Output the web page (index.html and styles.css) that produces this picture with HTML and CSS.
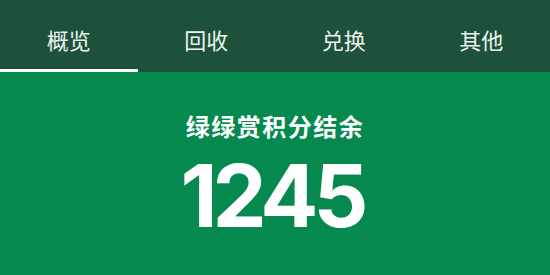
FILE: index.html
```html
<!DOCTYPE html>
<html lang="zh">
<head>
<meta charset="utf-8">
<link rel="stylesheet" href="styles.css">
</head>
<body>
<nav class="tabs">
  <div class="tab active">概览</div>
  <div class="tab">回收</div>
  <div class="tab">兑换</div>
  <div class="tab">其他</div>
</nav>
<main class="summary">
  <div class="label">绿绿赏积分结余</div>
  <div class="points">1245</div>
</main>
</body>
</html>
```
FILE: styles.css
```css
html, body {
  margin: 0;
  padding: 0;
  background: #05894f;
  width: 550px;
  height: 275px;
  overflow: hidden;
  font-family: "Noto Sans CJK SC", "Noto Sans", sans-serif;
}
.tabs {
  display: flex;
  height: 72px;
  background: #1d513a;
}
.tab {
  flex: 1;
  display: flex;
  align-items: center;
  justify-content: center;
  padding-top: 8px;
  box-sizing: border-box;
  font-size: 22px;
  color: #eef3ef;
  border-bottom: 3px solid transparent;
}
.tab.active {
  border-bottom-color: #ffffff;
}
.summary {
  display: flex;
  flex-direction: column;
  align-items: center;
  padding-top: 37px;
  color: #ffffff;
}
.label {
  font-size: 24px;
  font-weight: 700;
  letter-spacing: 1.5px;
  line-height: 34px;
}
.points {
  font-family: Inter, Roboto, sans-serif;
  font-size: 86px;
  font-weight: 700;
  line-height: 90px;
  margin-top: 8px;
  letter-spacing: -5px;
  margin-right: 6px;
}
```
